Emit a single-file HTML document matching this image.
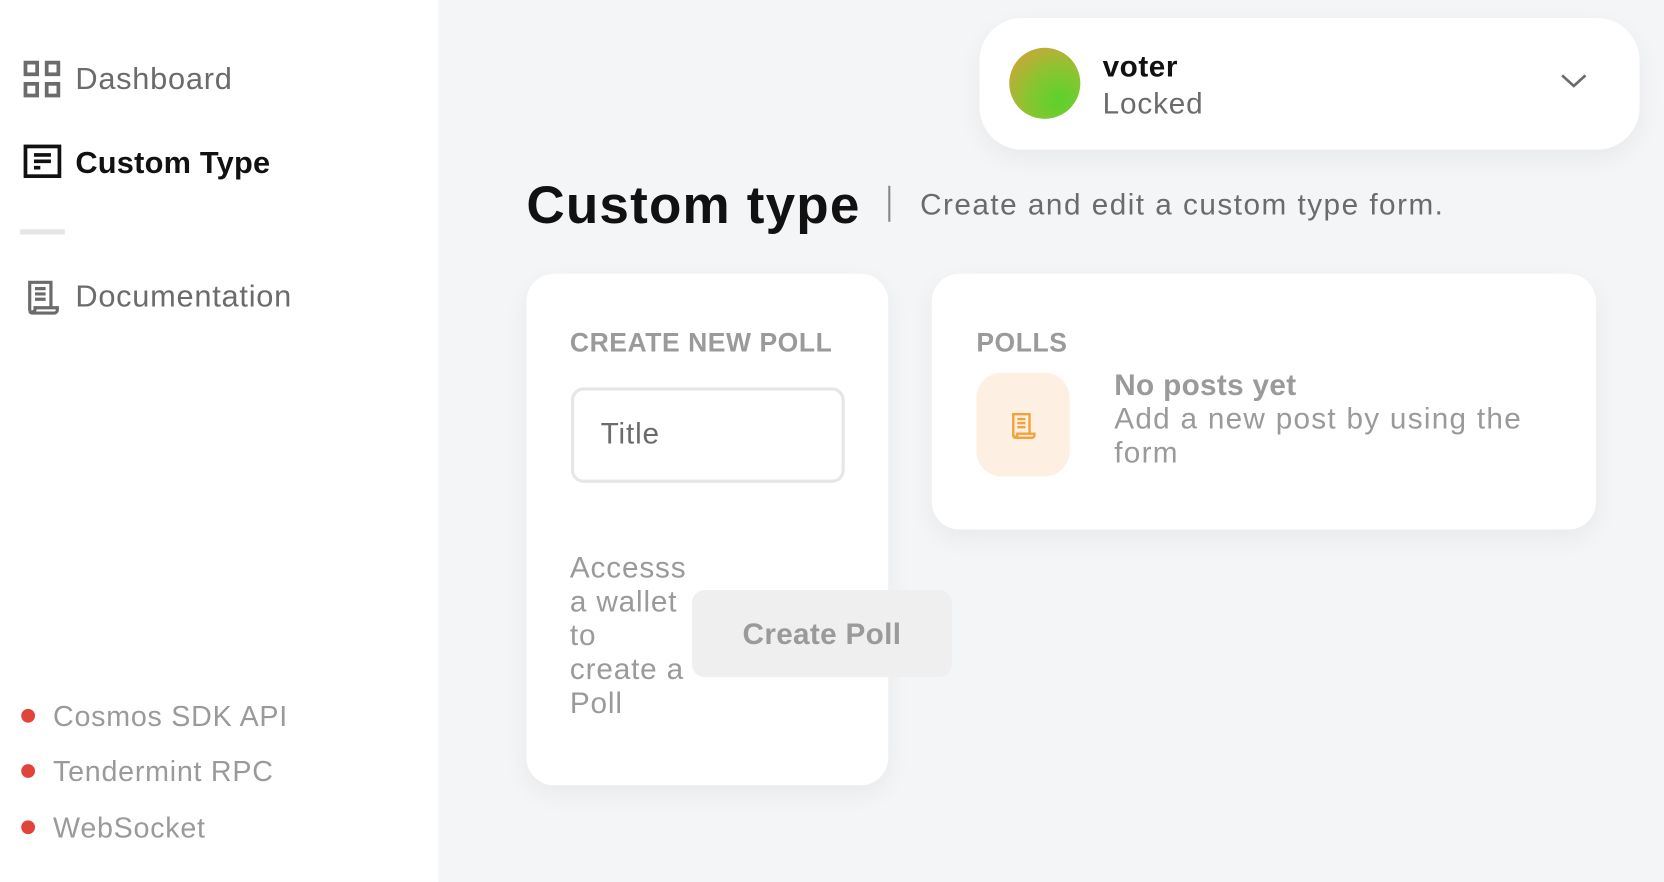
<!DOCTYPE html>
<html><head><meta charset="utf-8"><style>
html,body{margin:0;padding:0;width:1664px;height:882px;overflow:hidden;background:#f4f5f7;font-family:"Liberation Sans",sans-serif}
#w{position:absolute;left:0;top:0;width:1568px;height:831px;transform:scale(1.06122);transform-origin:0 0;background:#f4f5f7}
.a{position:absolute}
.side{left:0;top:0;width:413px;height:831px;background:#fff}
.nav{font-size:29px;color:#6b6b6b;letter-spacing:0.7px}
.card{background:#fff;border-radius:26px;box-shadow:0 8px 24px rgba(0,0,0,.05)}
.dot{width:13px;height:13px;border-radius:50%;background:#e0443b}
.st{font-size:27px;color:#9a9a9a;letter-spacing:0.7px}
</style></head><body><div id="w">
<div class="a side"></div>
<svg class="a" style="left:22px;top:57px" width="35" height="35" viewBox="0 0 35 35" fill="none" stroke="#6b6b6b" stroke-width="3.5"><rect x="2" y="2" width="11" height="11"/><rect x="22" y="2" width="11" height="11"/><rect x="2" y="22" width="11" height="11"/><rect x="22" y="22" width="11" height="11"/></svg>
<div class="a nav" style="left:71px;top:59px">Dashboard</div>
<svg class="a" style="left:22px;top:136px" width="36" height="32" viewBox="0 0 36 32" fill="none" stroke="#111" stroke-width="3.5"><rect x="2" y="2" width="32" height="28"/><path d="M10 10h16M10 16h16M10 22h6"/></svg>
<div class="a" style="left:71px;top:138px;font-size:29px;font-weight:bold;color:#111;letter-spacing:0.2px">Custom Type</div>
<div class="a" style="left:19px;top:216px;width:42px;height:5px;background:#e6e6e6"></div>
<svg class="a" style="left:24px;top:263px" width="32" height="34" viewBox="0 0 32 34" fill="none" stroke="#6b6b6b" stroke-width="3"><path d="M4 30V3h20v24M9 9h10M9 14h10M9 19h10M4 30a3 3 0 0 0 3 2h20a3 3 0 0 0 3-3v-2H9v2a3 3 0 0 1-5 1"/></svg>
<div class="a nav" style="left:71px;top:264px">Documentation</div>
<div class="a dot" style="left:20px;top:668px"></div><div class="a st" style="left:50px;top:660px">Cosmos SDK API</div>
<div class="a dot" style="left:20px;top:720px"></div><div class="a st" style="left:50px;top:712px">Tendermint RPC</div>
<div class="a dot" style="left:20px;top:773px"></div><div class="a st" style="left:50px;top:765px">WebSocket</div>

<div class="a card" style="left:923px;top:17px;width:622px;height:124px;border-radius:40px"></div>
<div class="a" style="left:951px;top:45px;width:67px;height:67px;border-radius:50%;background:radial-gradient(circle at 70% 75%,#5ad22e,#8cc430 45%,#d3a23a 90%)"></div>
<div class="a" style="left:1039px;top:47px;font-size:28px;font-weight:bold;color:#111;letter-spacing:0.5px">voter</div>
<div class="a" style="left:1039px;top:82px;font-size:28px;color:#6b6b6b;letter-spacing:0.8px">Locked</div>
<svg class="a" style="left:1470px;top:68px" width="26" height="16" viewBox="0 0 26 16" fill="none" stroke="#6b6b6b" stroke-width="2.5"><path d="M2 3l11 10 11-10"/></svg>

<div class="a" style="left:496px;top:164px;font-size:50px;font-weight:bold;color:#111;letter-spacing:1.1px">Custom type</div>
<div class="a" style="left:837px;top:175px;width:2px;height:34px;background:#888"></div>
<div class="a" style="left:867px;top:177px;font-size:28px;color:#6b6b6b;letter-spacing:1.4px">Create and edit a custom type form.</div>

<div class="a card" style="left:496px;top:258px;width:341px;height:482px"></div>
<div class="a" style="left:537px;top:309px;font-size:25px;font-weight:bold;color:#9a9a9a;letter-spacing:0.5px">CREATE NEW POLL</div>
<div class="a" style="left:538px;top:365px;width:252px;height:84px;border:3px solid #e6e6e6;border-radius:12px;background:#fff"></div>
<div class="a" style="left:566px;top:393px;font-size:28px;color:#6b6b6b;letter-spacing:0.8px">Title</div>
<div class="a" style="left:537px;top:519px;font-size:28px;line-height:32px;color:#9a9a9a;letter-spacing:0.8px">Accesss<br>a wallet<br>to<br>create a<br>Poll</div>
<div class="a" style="left:652px;top:556px;width:245px;height:82px;border-radius:12px;background:#efefef;color:#9a9a9a;font-size:28px;font-weight:bold;text-align:center;line-height:84px;letter-spacing:0.3px">Create Poll</div>

<div class="a card" style="left:878px;top:258px;width:626px;height:241px"></div>
<div class="a" style="left:920px;top:309px;font-size:25px;font-weight:bold;color:#9a9a9a;letter-spacing:0.5px">POLLS</div>
<div class="a" style="left:920px;top:351px;width:88px;height:98px;border-radius:24px;background:#fdf0e2"></div>
<svg class="a" style="left:951px;top:388px" width="26" height="26" viewBox="0 0 32 34" fill="none" stroke="#f3a23b" stroke-width="3"><path d="M4 30V3h20v24M9 9h10M9 14h10M9 19h10M4 30a3 3 0 0 0 3 2h20a3 3 0 0 0 3-3v-2H9v2a3 3 0 0 1-5 1"/></svg>
<div class="a" style="left:1050px;top:347px;font-size:28px;font-weight:bold;color:#9a9a9a;letter-spacing:0.3px">No posts yet</div>
<div class="a" style="left:1050px;top:379px;font-size:28px;line-height:32px;color:#9a9a9a;letter-spacing:1.2px">Add a new post by using the<br>form</div>
</div></body></html>
